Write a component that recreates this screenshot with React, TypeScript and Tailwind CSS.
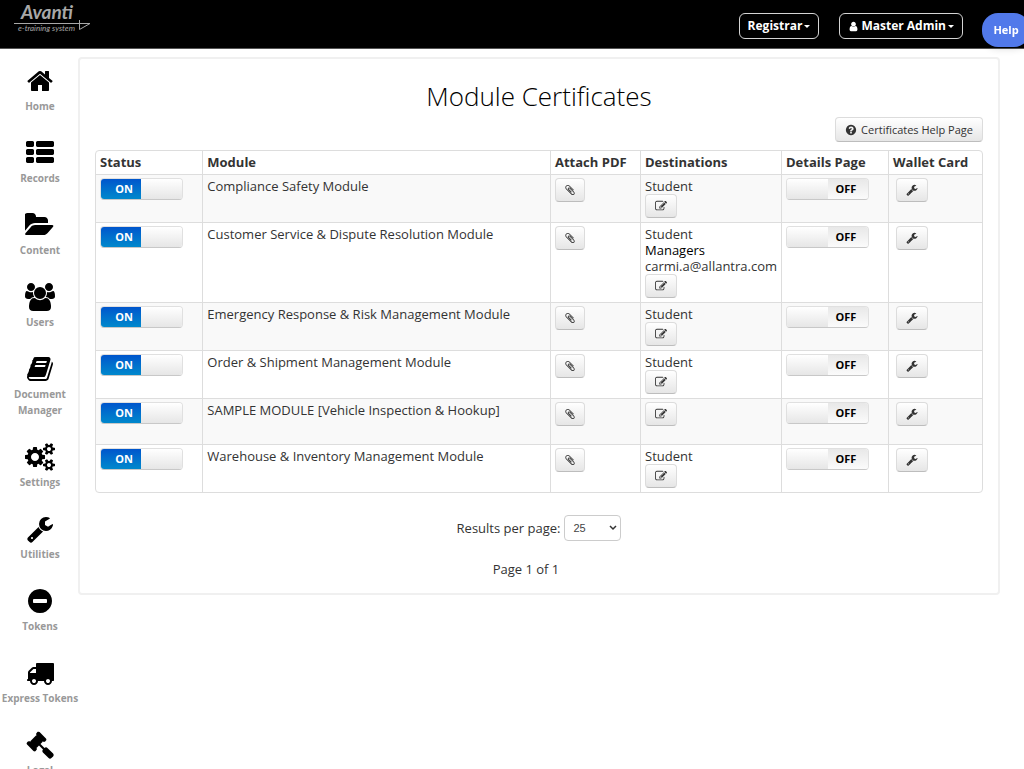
import type { ReactNode } from 'react';

interface IconProps {
  path: string;
  className: string;
  viewBox?: string;
}

interface NavItem {
  label: string;
  path: string;
  wide?: boolean;
}

interface ModuleItem {
  name: string;
  destinations: string[];
}

const ICONS = {
  home: 'M1472 992v480q0 26-19 45t-45 19h-384v-384h-256v384h-384q-26 0-45-19t-19-45v-480q0-1 .5-3t.5-3l575-474 575 474q1 2 1 6zm223-69l-62 74q-8 9-21 11h-3q-13 0-21-7l-692-577-692 577q-12 8-24 7-13-2-21-11l-62-74q-8-10-7-23.5t11-21.5l719-599q32-26 76-26t76 26l244 204v-195q0-14 9-23t23-9h192q14 0 23 9t9 23v408l219 182q10 8 11 21.5t-7 23.5z',
  list: 'M512 1248v192q0 40-28 68t-68 28h-320q-40 0-68-28t-28-68v-192q0-40 28-68t68-28h320q40 0 68 28t28 68zm0-512v192q0 40-28 68t-68 28h-320q-40 0-68-28t-28-68v-192q0-40 28-68t68-28h320q40 0 68 28t28 68zm1280 512v192q0 40-28 68t-68 28h-960q-40 0-68-28t-28-68v-192q0-40 28-68t68-28h960q40 0 68 28t28 68zm-1280-1024v192q0 40-28 68t-68 28h-320q-40 0-68-28t-28-68v-192q0-40 28-68t68-28h320q40 0 68 28t28 68zm1280 512v192q0 40-28 68t-68 28h-960q-40 0-68-28t-28-68v-192q0-40 28-68t68-28h960q40 0 68 28t28 68zm0-512v192q0 40-28 68t-68 28h-960q-40 0-68-28t-28-68v-192q0-40 28-68t68-28h960q40 0 68 28t28 68z',
  folder: 'M1815 952q0 31-31 66l-336 396q-43 51-120.5 86.5t-143.5 35.5h-1088q-34 0-60.5-13t-26.5-43q0-31 31-66l336-396q43-51 120.5-86.5t143.5-35.5h1088q34 0 60.5 13t26.5 43zm-343-344v160h-832q-94 0-197 47.5t-164 119.5l-337 396-5 6q0-4-.5-12.5t-.5-12.5v-960q0-92 66-158t158-66h320q92 0 158 66t66 158v32h544q92 0 158 66t66 158z',
  users: 'M593 896q-162 5-265 128h-134q-82 0-138-40.5t-56-118.5q0-353 124-353 6 0 43.5 21t97.5 42.5 119 21.5q67 0 133-23-5 37-5 66 0 139 81 256zm1071 637q0 120-73 189.5t-194 69.5h-874q-121 0-194-69.5t-73-189.5q0-53 3.5-103.5t14-109 26.5-108.5 43-97.5 62-81 85.5-53.5 111.5-20q10 0 43 21.5t73 48 107 48 135 21.5 135-21.5 107-48 73-48 43-21.5q61 0 111.5 20t85.5 53.5 62 81 43 97.5 26.5 108.5 14 109 3.5 103.5zm-1024-1277q0 106-75 181t-181 75-181-75-75-181 75-181 181-75 181 75 75 181zm704 384q0 159-112.5 271.5t-271.5 112.5-271.5-112.5-112.5-271.5 112.5-271.5 271.5-112.5 271.5 112.5 112.5 271.5zm576 225q0 78-56 118.5t-138 40.5h-134q-103-123-265-128 81-117 81-256 0-29-5-66 66 23 133 23 59 0 119-21.5t97.5-42.5 43.5-21q124 0 124 353zm-128-609q0 106-75 181t-181 75-181-75-75-181 75-181 181-75 181 75 75 181z',
  book: 'M1703 478q40 57 18 129l-275 906q-19 64-76.5 107.5t-122.5 43.5h-923q-77 0-148.5-53.5t-99.5-131.5q-24-67-2-127 0-4 3-27t4-37q1-8-3-21.5t-3-19.5q2-11 8-21t16.5-23.5 16.5-23.5q23-38 45-91.5t30-91.5q3-10 .5-30t-.5-28q3-11 17-28t17-23q21-36 42-92t25-90q1-9-2.5-32t.5-28q4-13 22-30.5t22-22.5q19-26 42.5-84.5t27.5-96.5q1-8-3-25.5t-2-26.5q2-8 9-18t18-23 17-21q8-12 16.5-30.5t15-35 16-36 19.5-32 26.5-23.5 36-11.5 47.5 5.5l-1 3q38-9 51-9h761q74 0 114 56t18 130l-274 906q-36 119-71.5 153.5t-128.5 34.5h-869q-27 0-38 15-11 16-1 43 24 70 144 70h923q29 0 56-15.5t35-41.5l300-987q7-22 5-57 38 15 59 43zm-1064 2q-4 13 2 22.5t20 9.5h608q13 0 25.5-9.5t16.5-22.5l21-64q4-13-2-22.5t-20-9.5h-608q-13 0-25.5 9.5t-16.5 22.5zm-83 256q-4 13 2 22.5t20 9.5h608q13 0 25.5-9.5t16.5-22.5l21-64q4-13-2-22.5t-20-9.5h-608q-13 0-25.5 9.5t-16.5 22.5z',
  cogs: 'M896 896q0-106-75-181t-181-75-181 75-75 181 75 181 181 75 181-75 75-181zm768 512q0-52-38-90t-90-38-90 38-38 90q0 53 37.5 90.5t90.5 37.5 90.5-37.5 37.5-90.5zm0-1024q0-52-38-90t-90-38-90 38-38 90q0 53 37.5 90.5t90.5 37.5 90.5-37.5 37.5-90.5zm-384 421v185q0 10-7 19.5t-16 10.5l-155 24q-11 35-32 76 34 48 90 115 7 11 7 20 0 12-7 19-23 30-82.5 89.5t-78.5 59.5q-11 0-21-7l-115-90q-37 19-77 31-11 108-23 155-7 24-30 24h-186q-11 0-20-7.5t-10-17.5l-23-153q-34-10-75-31l-118 89q-7 7-20 7-11 0-21-8-144-133-144-160 0-9 7-19 10-14 41-53t47-61q-23-44-35-82l-152-24q-10-1-17-9.5t-7-19.5v-185q0-10 7-19.5t16-10.5l155-24q11-35 32-76-34-48-90-115-7-11-7-20 0-12 7-20 22-30 82-89t79-59q11 0 21 7l115 90q34-18 77-32 11-108 23-154 7-24 30-24h186q11 0 20 7.5t10 17.5l23 153q34 10 75 31l118-89q8-7 20-7 11 0 21 8 144 133 144 160 0 8-7 19-12 16-42 54t-45 60q23 48 34 82l152 23q10 2 17 10.5t7 19.5zm640 533v140q0 16-149 31-12 27-30 52 51 113 51 138 0 4-4 7-122 71-124 71-8 0-46-47t-52-68q-20 2-30 2t-30-2q-14 21-52 68t-46 47q-2 0-124-71-4-3-4-7 0-25 51-138-18-25-30-52-149-15-149-31v-140q0-16 149-31 13-29 30-52-51-113-51-138 0-4 4-7 4-2 35-20t59-34 30-16q8 0 46 46.5t52 67.5q20-2 30-2t30 2q51-71 92-112l6-2q4 0 124 70 4 3 4 7 0 25-51 138 17 23 30 52 149 15 149 31zm0-1024v140q0 16-149 31-12 27-30 52 51 113 51 138 0 4-4 7-122 71-124 71-8 0-46-47t-52-68q-20 2-30 2t-30-2q-14 21-52 68t-46 47q-2 0-124-71-4-3-4-7 0-25 51-138-18-25-30-52-149-15-149-31v-140q0-16 149-31 13-29 30-52-51-113-51-138 0-4 4-7 4-2 35-20t59-34 30-16q8 0 46 46.5t52 67.5q20-2 30-2t30 2q51-71 92-112l6-2q4 0 124 70 4 3 4 7 0 25-51 138 17 23 30 52 149 15 149 31z',
  wrench: 'M448 1472q0-26-19-45t-45-19-45 19-19 45 19 45 45 19 45-19 19-45zm644-420l-682 682q-37 37-90 37-52 0-91-37l-106-108q-38-36-38-90 0-53 38-91l681-681q39 98 114.5 173.5t173.5 114.5zm634-435q0 39-23 106-47 134-164.5 217.5t-258.5 83.5q-185 0-316.5-131.5t-131.5-316.5 131.5-316.5 316.5-131.5q58 0 121.5 16.5t107.5 46.5q16 11 16 28t-16 28l-293 169v224l193 107q5-3 79-48.5t135.5-81 70.5-35.5q15 0 23.5 10t8.5 25z',
  minus: 'M1344 960v-128q0-26-19-45t-45-19h-768q-26 0-45 19t-19 45v128q0 26 19 45t45 19h768q26 0 45-19t19-45zm320-64q0 209-103 385.5t-279.5 279.5-385.5 103-385.5-103-279.5-279.5-103-385.5 103-385.5 279.5-279.5 385.5-103 385.5 103 279.5 279.5 103 385.5z',
  truck: 'M640 1408q0-52-38-90t-90-38-90 38-38 90 38 90 90 38 90-38 38-90zm-384-512h384v-256h-158q-13 0-22 9l-195 195q-9 9-9 22v30zm1280 512q0-52-38-90t-90-38-90 38-38 90 38 90 90 38 90-38 38-90zm256-1088v1024q0 15-4 26.5t-13.5 18.5-16.5 11.5-23.5 6-22.5 2-25.5 0-22.5-.5q0 106-75 181t-181 75-181-75-75-181h-384q0 106-75 181t-181 75-181-75-75-181h-64q-3 0-22.5.5t-25.5 0-22.5-2-23.5-6-16.5-11.5-13.5-18.5-4-26.5q0-26 19-45t45-19v-320q0-8-.5-35t0-38 2.5-34.5 6.5-37 14-30.5 22.5-30l198-198q19-19 50.5-32t58.5-13h160v-192q0-26 19-45t45-19h1024q26 0 45 19t19 45z',
  gavel: 'M1771 1536q0 53-37 90l-107 108q-39 37-91 37-53 0-90-37l-363-364q-38-36-38-90 0-53 43-96l-256-256-126 126q-14 14-34 14t-34-14q2 2 12.5 12t12.5 13 10 11.5 10 13.5 6 13.5 5.5 16.5 1.5 18q0 38-28 68-3 3-16.5 18t-19 20.5-18.5 16.5-22 15.5-22 9-26 4.5q-40 0-68-28l-408-408q-28-28-28-68 0-13 4.5-26t9-22 15.5-22 16.5-18.5 20.5-19 18-16.5q30-28 68-28 10 0 18 1.5t16.5 5.5 13.5 6 13.5 10 11.5 10 13 12.5 12 12.5q-14-14-14-34t14-34l348-348q14-14 34-14t34 14q-2-2-12.5-12t-12.5-13-10-11.5-10-13.5-6-13.5-5.5-16.5-1.5-18q0-38 28-68 3-3 16.5-18t19-20.5 18.5-16.5 22-15.5 22-9 26-4.5q40 0 68 28l408 408q28 28 28 68 0 13-4.5 26t-9 22-15.5 22-16.5 18.5-20.5 19-18 16.5q-30 28-68 28-10 0-18-1.5t-16.5-5.5-13.5-6-13.5-10-11.5-10-13-12.5-12-12.5q14 14 14 34t-14 34l-126 126 256 256q43-43 96-43 52 0 91 37l363 363q37 39 37 91z',
  clip: 'M1596 1385q0 117-79 196t-196 79q-135 0-235-100l-777-776q-113-115-113-271 0-159 110-270t269-111q158 0 273 113l605 606q10 10 10 22 0 16-30.5 46.5t-46.5 30.5q-13 0-23-10l-606-607q-79-77-181-77-106 0-179 75t-73 181q0 105 76 181l776 777q63 63 145 63 64 0 106-42t42-106q0-82-63-145l-581-581q-26-24-60-24-29 0-48 19t-19 48q0 32 25 59l410 410q10 10 10 22 0 16-31 47t-47 31q-12 0-22-10l-410-410q-63-61-63-149 0-82 57-139t139-57q88 0 149 63l581 581q100 98 100 235z',
  edit: 'M888 1184l116-116-152-152-116 116v56h96v96h56zm440-720q-16-16-33 1l-350 350q-17 17-1 33t33-1l350-350q17-17 1-33zm80 594v190q0 119-84.5 203.5t-203.5 84.5h-832q-119 0-203.5-84.5t-84.5-203.5v-832q0-119 84.5-203.5t203.5-84.5h832q63 0 117 25 15 7 18 23 3 17-9 29l-49 49q-14 14-32 8-23-6-45-6h-832q-66 0-113 47t-47 113v832q0 66 47 113t113 47h832q66 0 113-47t47-113v-126q0-13 9-22l64-64q15-15 35-7t20 29zm-96-738l288 288-672 672h-288v-288zm444 132l-92 92-288-288 92-92q28-28 68-28t68 28l152 152q28 28 28 68t-28 68z',
  question: 'M1024 1376v-192q0-14-9-23t-23-9h-192q-14 0-23 9t-9 23v192q0 14 9 23t23 9h192q14 0 23-9t9-23zm256-672q0-88-55.5-163t-138.5-116-170-41q-243 0-371 213-15 24 8 42l132 100q7 6 19 6 16 0 25-12 53-68 86-92 34-24 86-24 48 0 85.5 26t37.5 59q0 38-20 61t-68 45q-63 28-115.5 86.5t-52.5 125.5v36q0 14 9 23t23 9h192q14 0 23-9t9-23q0-19 21.5-49.5t54.5-49.5q32-18 49-28.5t46-35 44.5-48 28-60.5 12.5-81zm384 192q0 209-103 385.5t-279.5 279.5-385.5 103-385.5-103-279.5-279.5-103-385.5 103-385.5 279.5-279.5 385.5-103 385.5 103 279.5 279.5 103 385.5z',
  user: 'M1536 1399q0 109-62.5 187t-150.5 78h-854q-88 0-150.5-78t-62.5-187q0-85 8.5-160.5t31.5-152 58.5-131 94-89 134.5-34.5q131 128 313 128t313-128q76 0 134.5 34.5t94 89 58.5 131 31.5 152 8.5 160.5zm-256-887q0 159-112.5 271.5t-271.5 112.5-271.5-112.5-112.5-271.5 112.5-271.5 271.5-112.5 271.5 112.5 112.5 271.5z',
};

const NAV_ITEMS: NavItem[] = [
  { label: 'Home', path: ICONS.home },
  { label: 'Records', path: ICONS.list },
  { label: 'Content', path: ICONS.folder, wide: true },
  { label: 'Users', path: ICONS.users, wide: true },
  { label: 'Document Manager', path: ICONS.book },
  { label: 'Settings', path: ICONS.cogs, wide: true },
  { label: 'Utilities', path: ICONS.wrench },
  { label: 'Tokens', path: ICONS.minus },
  { label: 'Express Tokens', path: ICONS.truck },
  { label: 'Legal', path: ICONS.gavel },
];

const MODULES: ModuleItem[] = [
  { name: 'Compliance Safety Module', destinations: ['Student'] },
  {
    name: 'Customer Service & Dispute Resolution Module',
    destinations: ['Student', 'Managers', 'carmi.a@allantra.com'],
  },
  { name: 'Emergency Response & Risk Management Module', destinations: ['Student'] },
  { name: 'Order & Shipment Management Module', destinations: ['Student'] },
  { name: 'SAMPLE MODULE [Vehicle Inspection & Hookup]', destinations: [] },
  { name: 'Warehouse & Inventory Management Module', destinations: ['Student'] },
];

function Icon({ path, className, viewBox = '0 0 1792 1792' }: IconProps) {
  return (
    <svg viewBox={viewBox} className={className} fill="currentColor" aria-hidden="true">
      <path d={path} />
    </svg>
  );
}

function Logo() {
  return (
    <svg width="80" height="40" viewBox="0 0 80 40" aria-label="Avanti e-training system">
      <g fill="#a8a8a8" fontFamily="Lato, sans-serif" fontStyle="italic">
        <text x="7" y="19" fontSize="19" fontWeight="700">
          Avanti
        </text>
        <text x="4" y="31" fontSize="8" fontWeight="400">
          e-training system
        </text>
      </g>
      <path d="M0 23.5H76L65.5 29.5V20" fill="none" stroke="#a8a8a8" strokeWidth="1" />
    </svg>
  );
}

function Caret() {
  return <span className="border-x-[3px] border-t-[3px] border-x-transparent border-t-white" />;
}

function HeaderButton({ children }: { children: ReactNode }) {
  return (
    <button
      type="button"
      className="flex h-[26px] items-center gap-0.5 rounded-md border border-neutral-300 px-2 text-xs font-bold text-white"
    >
      {children}
    </button>
  );
}

function IconButton({ label, children }: { label: string; children: ReactNode }) {
  return (
    <button
      type="button"
      aria-label={label}
      className="flex h-6 items-center rounded-sm border border-[#dcdcdc] border-b-[#bdbdbd] bg-linear-to-b from-white to-[#e6e6e6] px-2 text-[#333]"
    >
      {children}
    </button>
  );
}

function Toggle({ label, on }: { label: string; on: boolean }) {
  return (
    <label className="relative mb-4 flex h-[22px] w-[83px] cursor-pointer overflow-hidden rounded-sm border border-[#e0e0e0] border-b-[#c8c8c8] text-[11px] font-bold">
      <input type="checkbox" defaultChecked={on} aria-label={label} className="sr-only" />
      {on ? (
        <>
          <span className="flex w-10 items-center justify-center bg-linear-to-b from-[#0055cc] to-[#0088cc] pl-1.5 text-white">
            ON
          </span>
          <span className="flex-1 bg-linear-to-b from-white to-[#e6e6e6]" />
        </>
      ) : (
        <>
          <span className="flex-1 bg-linear-to-b from-white to-[#e6e6e6]" />
          <span className="flex w-10 items-center justify-center bg-linear-to-b from-[#e8e8e8] to-[#fbfbfb] pr-1 text-black">
            OFF
          </span>
        </>
      )}
    </label>
  );
}

function Sidebar() {
  return (
    <nav className="w-20 shrink-0 pt-[18px]">
      <ul>
        {NAV_ITEMS.map((item) => (
          <li key={item.label} className="mb-[25px]">
            <a href="#" className="flex flex-col items-center gap-[3px]">
              <Icon
                path={item.path}
                viewBox={item.wide ? '0 0 1920 1792' : '0 0 1792 1792'}
                className={item.wide ? 'h-7 w-[30px] text-black' : 'size-7 text-black'}
              />
              <span className="text-center text-[10px] leading-4 font-bold text-[#999]">
                {item.label}
              </span>
            </a>
          </li>
        ))}
      </ul>
    </nav>
  );
}

function ModuleRow({ item }: { item: ModuleItem }) {
  return (
    <tr className="odd:bg-[#f9f9f9]">
      <td>
        <Toggle label={`${item.name} status`} on />
      </td>
      <td>{item.name}</td>
      <td>
        <IconButton label="Attach PDF">
          <Icon path={ICONS.clip} className="size-3" />
        </IconButton>
      </td>
      <td>
        {item.destinations.map((name) => (
          <p key={name} className={name === 'Managers' ? 'text-black' : undefined}>
            {name}
          </p>
        ))}
        <IconButton label="Edit destinations">
          <Icon path={ICONS.edit} className="h-3 w-[14px]" />
        </IconButton>
      </td>
      <td>
        <Toggle label={`${item.name} details page`} on={false} />
      </td>
      <td className="pl-[7px]!">
        <IconButton label="Wallet card">
          <Icon path={ICONS.wrench} className="h-3 w-[14px]" />
        </IconButton>
      </td>
    </tr>
  );
}

function ModuleTable() {
  return (
    <div className="overflow-hidden rounded-sm border border-[#ddd]">
      <table className="w-full table-fixed border-separate border-spacing-0 text-left [&_td]:border-t [&_td]:border-[#ddd] [&_td]:px-1 [&_td]:pt-[3px] [&_td]:pb-1 [&_td]:align-top [&_td+td]:border-l [&_th]:border-[#ddd] [&_th]:px-1 [&_th]:pt-[3px] [&_th]:pb-1 [&_th+th]:border-l">
        <colgroup>
          <col className="w-[12%]" />
          <col />
          <col className="w-[90px]" />
          <col className="w-[141px]" />
          <col className="w-[107px]" />
          <col className="w-[94px]" />
        </colgroup>
        <thead>
          <tr>
            <th>Status</th>
            <th>Module</th>
            <th>Attach PDF</th>
            <th>Destinations</th>
            <th>Details Page</th>
            <th>Wallet Card</th>
          </tr>
        </thead>
        <tbody>
          {MODULES.map((item) => (
            <ModuleRow key={item.name} item={item} />
          ))}
        </tbody>
      </table>
    </div>
  );
}

function App() {
  return (
    <div className="flex h-screen flex-col overflow-hidden bg-white font-['Open_Sans',sans-serif] text-[13px] leading-4 text-[#333]">
      <header className="flex h-[49px] shrink-0 items-start justify-between border-b border-[#555] bg-black pr-[61px] pl-[14px]">
        <a href="#">
          <Logo />
        </a>
        <div className="flex gap-5 pt-[13px]">
          <HeaderButton>
            Registrar
            <Caret />
          </HeaderButton>
          <HeaderButton>
            <Icon path={ICONS.user} className="size-[11px]" />
            Master Admin
            <Caret />
          </HeaderButton>
        </div>
      </header>
      <button
        type="button"
        className="fixed top-[13px] -right-1.5 h-[34px] w-12 rounded-2xl bg-[#5179ea] text-[11px] font-bold text-white shadow-md"
      >
        Help
      </button>

      <div className="flex min-h-0 flex-1 items-start">
        <Sidebar />
        <main className="mt-2 mr-6 -ml-0.5 flex-1 rounded-sm border-2 border-[#f0f0f0] px-[15px] pb-4">
          <h1 className="pt-[19px] text-center text-[26px] leading-9 font-light text-black">
            Module Certificates
          </h1>
          <div className="mt-[3px] mb-2 flex justify-end">
            <button
              type="button"
              className="flex h-[25px] items-center gap-1 rounded-sm border border-[#dcdcdc] border-b-[#bdbdbd] bg-linear-to-b from-white to-[#e6e6e6] px-[9px] text-[11px] text-[#333]"
            >
              <Icon path={ICONS.question} className="size-3" />
              Certificates Help Page
            </button>
          </div>
          <ModuleTable />
          <div className="mt-[22px] flex items-center justify-center gap-1">
            <label htmlFor="per-page">Results per page:</label>
            <div className="relative">
              <select
                id="per-page"
                defaultValue="25"
                className="h-[26px] w-[57px] appearance-none rounded-sm border border-[#ccc] bg-white px-2 font-['Liberation_Sans',sans-serif] text-[11px] text-[#444]"
              >
                <option>25</option>
                <option>50</option>
                <option>100</option>
              </select>
              <svg
                viewBox="0 0 8 6"
                className="pointer-events-none absolute top-2.5 right-1 h-1.5 w-2"
                fill="none"
                stroke="#333"
                strokeWidth="1.5"
              >
                <path d="M1 1l3 3 3-3" />
              </svg>
            </div>
          </div>
          <p className="mt-5 pr-[26px] text-center">Page 1 of 1</p>
        </main>
      </div>
    </div>
  );
}

export default App;
